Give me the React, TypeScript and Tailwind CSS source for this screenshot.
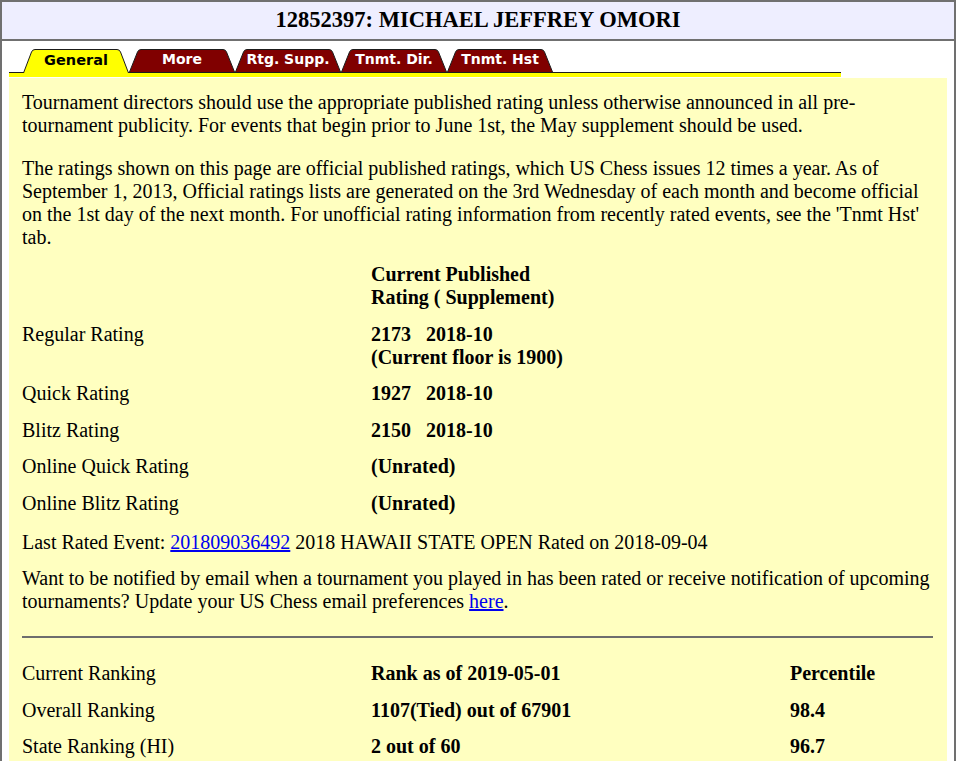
import React from 'react'

const tabs = [
  { label: 'General', active: true },
  { label: 'More', active: false },
  { label: 'Rtg. Supp.', active: false },
  { label: 'Tnmt. Dir.', active: false },
  { label: 'Tnmt. Hst', active: false },
]

function Tab({ label, active }: { label: string; active: boolean }) {
  return (
    <div className={active ? 'relative z-10 w-[106px] h-[24px] -mb-px flex items-center justify-center' : 'relative w-[106px] h-[23px] flex items-center justify-center'}>
      <svg className="absolute inset-0" width="106" height={active ? 24 : 23} viewBox={active ? '0 0 106 24' : '0 0 106 23'}>
        <path
          d={active ? 'M0.5 24 L8.5 3 Q9.5 0.5 12 0.5 L94 0.5 Q96.5 0.5 97.5 3 L105.5 24' : 'M0.5 23 L8.5 3 Q9.5 0.5 12 0.5 L94 0.5 Q96.5 0.5 97.5 3 L105.5 23'}
          fill={active ? '#ffff00' : '#800000'}
          stroke="#1c1c1c"
          strokeWidth="1"
        />
      </svg>
      <span
        className={active ? 'relative -mt-[1px] text-black font-bold text-[14.5px]' : 'relative -mt-[2px] text-white font-bold text-[14px]'}
        style={{ fontFamily: '"DejaVu Sans", Verdana, sans-serif' }}
      >
        {label}
      </span>
    </div>
  )
}

export default function App() {
  const ratings = [
    { name: 'Regular Rating', value: ['2173\u00a0\u00a0\u00a02018-10', '(Current floor is 1900)'] },
    { name: 'Quick Rating', value: ['1927\u00a0\u00a0\u00a02018-10'] },
    { name: 'Blitz Rating', value: ['2150\u00a0\u00a0\u00a02018-10'] },
    { name: 'Online Quick Rating', value: ['(Unrated)'] },
    { name: 'Online Blitz Rating', value: ['(Unrated)'] },
  ]

  const rankings = [
    { name: 'Overall Ranking', rank: '1107(Tied) out of 67901', pct: '98.4' },
    { name: 'State Ranking (HI)', rank: '2 out of 60', pct: '96.7' },
  ]

  return (
    <div className="w-[960px] h-[761px] overflow-hidden bg-white" style={{ fontFamily: '"Liberation Serif", "Times New Roman", serif' }}>
      <div className="w-[956px] border-2 border-[#707070]">
        {/* Title */}
        <div className="h-[39px] bg-[#eeeeff] border-b-2 border-[#707070] flex items-center justify-center">
          <h1 className="text-[22.5px] font-bold text-black leading-none">12852397: MICHAEL JEFFREY OMORI</h1>
        </div>

        <div className="px-[7px] pt-[7px]">
          {/* Tabs */}
          <div className="w-[832px]">
            <div className="flex items-end pl-[14px] h-[24px]">
              {tabs.map((t) => (
                <Tab key={t.label} label={t.label} active={t.active} />
              ))}
            </div>
            <div className="h-[5px] border-t border-[#1c1c1c] bg-[#ffff00]" />
          </div>

          {/* Content */}
          <div className="mt-px bg-[#ffffc0] pl-[13px] pr-[14px] pt-[13px] pb-[40px] text-[20px] leading-[23px] text-black">
            <p className="mb-[20px]">
              Tournament directors should use the appropriate published rating unless otherwise announced in all pre-tournament publicity. For events that begin prior to June 1st, the May supplement should be used.
            </p>
            <p>
              The ratings shown on this page are official published ratings, which US Chess issues 12 times a year. As of September 1, 2013, Official ratings lists are generated on the 3rd Wednesday of each month and become official on the 1st day of the next month. For unofficial rating information from recently rated events, see the 'Tnmt Hst' tab.
            </p>

            <div className="mt-[14px] grid grid-cols-[349px_1fr] gap-y-[13.6px]">
              <div />
              <div className="font-bold">
                Current Published
                <br />
                Rating ( Supplement)
              </div>
              {ratings.map((r) => (
                <React.Fragment key={r.name}>
                  <div>{r.name}</div>
                  <div className="font-bold">
                    {r.value.map((v) => (
                      <div key={v}>{v}</div>
                    ))}
                  </div>
                </React.Fragment>
              ))}
            </div>

            <p className="mt-[16px]">
              Last Rated Event:{' '}
              <a href="#" className="text-[#0000ee] underline">201809036492</a> 2018 HAWAII STATE OPEN Rated on 2018-09-04
            </p>
            <p className="mt-[13px]">
              Want to be notified by email when a tournament you played in has been rated or receive notification of upcoming tournaments? Update your US Chess email preferences{' '}
              <a href="#" className="text-[#0000ee] underline">here</a>.
            </p>

            <hr className="mt-[23px] border-0 h-[2px] bg-[#6e6e6e]" />

            <div className="mt-[24px] grid grid-cols-[349px_419px_1fr] gap-y-[13.6px]">
              <div>Current Ranking</div>
              <div className="font-bold">Rank as of 2019-05-01</div>
              <div className="font-bold">Percentile</div>
              {rankings.map((r) => (
                <React.Fragment key={r.name}>
                  <div>{r.name}</div>
                  <div className="font-bold">{r.rank}</div>
                  <div className="font-bold">{r.pct}</div>
                </React.Fragment>
              ))}
            </div>
          </div>
        </div>
      </div>
    </div>
  )
}
